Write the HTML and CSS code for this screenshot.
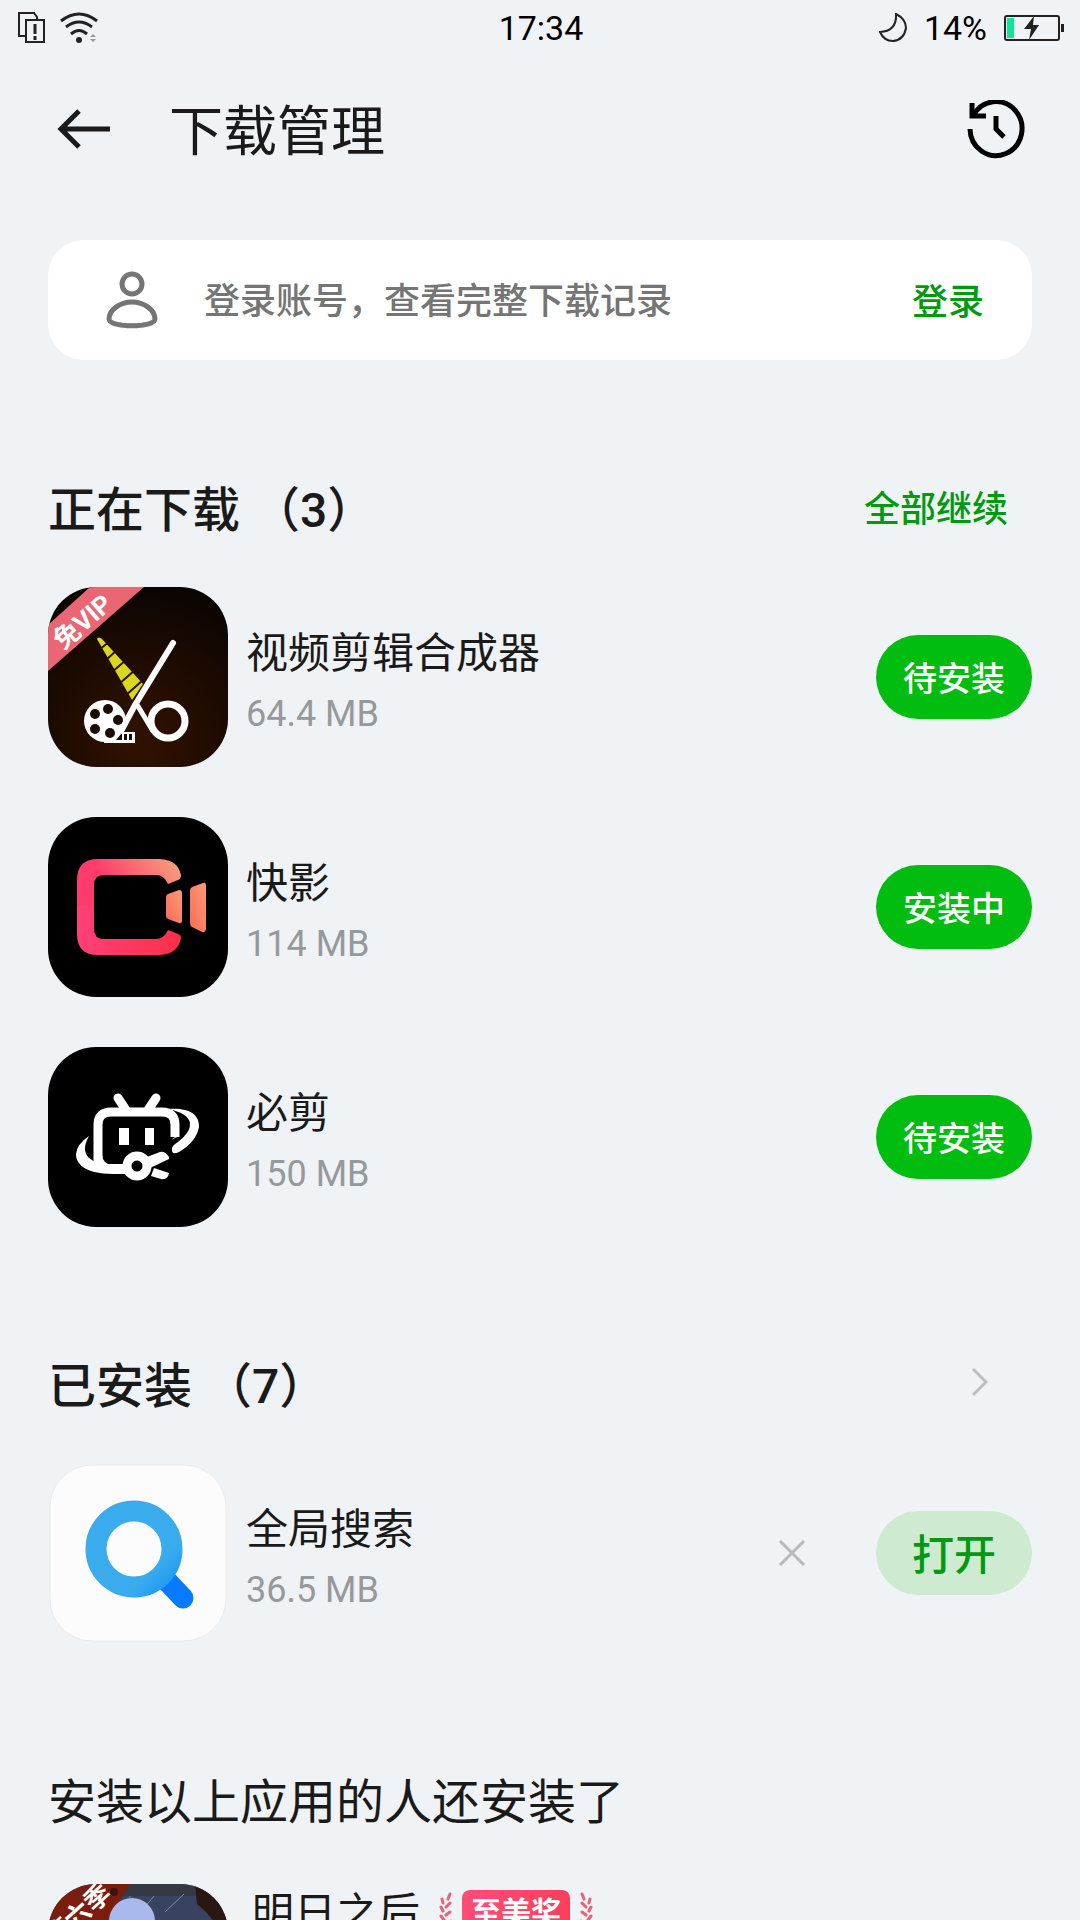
FILE: index.html
```html
<!DOCTYPE html>
<html lang="zh-CN">
<head>
  <meta charset="UTF-8">
  <meta name="viewport" content="width=device-width, initial-scale=1.0">
  <title>下载管理</title>
  <link rel="stylesheet" href="styles.css">
</head>
<body>

  <div class="status-bar">
    <div class="status-left">
      <svg width="28" height="32" viewBox="0 0 28 32" fill="none" stroke="#222" stroke-width="2">
        <path d="M7 24H1V1H16L19 5V8"/>
        <rect x="8" y="8" width="18" height="22"/>
        <path d="M17 12V22M17 24V28" stroke-width="3"/>
      </svg>
      <svg width="38" height="32" viewBox="0 0 38 32" fill="none" stroke="#222" stroke-width="3">
        <path d="M1 9Q19 -5 37 9M6 15Q19 5 32 15M11 22Q19 15 27 22"/>
        <circle cx="19" cy="28" r="3" fill="#222" stroke="none"/>
        <path d="M30 25L33 22L36 25ZM30 27L33 30L36 27Z" fill="#999" stroke="none"/>
      </svg>
    </div>
    <span class="clock">17:34</span>
    <div class="status-right">
      <svg width="28" height="30" viewBox="0 0 28 30" fill="none" stroke="#222" stroke-width="2">
        <path d="M17 1Q27 6 27 15Q25 27 14 28Q5 28 1 19Q18 18 17 1Z"/>
      </svg>
      <span>14%</span>
      <svg width="60" height="26" viewBox="0 0 60 26">
        <rect x="1" y="1" width="54" height="24" rx="2" fill="none" stroke="#222" stroke-width="2"/>
        <rect x="3" y="3" width="7" height="20" fill="#12e595"/>
        <rect x="57" y="9" width="3" height="8" fill="#222"/>
        <path d="M30 1L20 14H27L25 25L35 10H29Z" fill="#222"/>
      </svg>
    </div>
  </div>

  <header class="top-bar">
    <button class="icon-btn" aria-label="返回">
      <svg width="54" height="42" viewBox="0 0 54 42" fill="none" stroke="#1a1a1a" stroke-width="5">
        <path d="M53 20H4M22 2L4 20L22 38"/>
      </svg>
    </button>
    <h1>下载管理</h1>
    <button class="icon-btn history" aria-label="下载历史">
      <svg width="60" height="60" viewBox="0 0 60 60" fill="none" stroke="#000" stroke-width="5">
        <path d="M4 29A26 27 0 1 0 7 16"/>
        <path d="M6 3V16H20"/>
        <path d="M30 16V29L38 37"/>
      </svg>
    </button>
  </header>

  <section class="login-card">
    <svg class="person" width="52" height="58" viewBox="0 0 52 58" fill="none" stroke="#757575" stroke-width="5">
      <circle cx="26" cy="13" r="10"/>
      <path d="M26 31C38 31 49 39 49 48C49 57 3 57 3 48C3 39 14 31 26 31Z"/>
    </svg>
    <p>登录账号，查看完整下载记录</p>
    <a href="#login">登录</a>
  </section>

  <section class="group">
    <div class="group-head">
      <h2>正在下载 （3）</h2>
      <button class="resume-all">全部继续</button>
    </div>
    <ul class="app-list">
      <li class="app">
        <svg class="app-icon" viewBox="0 0 180 180">
          <defs>
            <radialGradient id="brown" cx="0.5" cy="0.85" r="0.9">
              <stop offset="0" stop-color="#321200"/>
              <stop offset="1" stop-color="#0a0402"/>
            </radialGradient>
          </defs>
          <rect width="180" height="180" fill="url(#brown)"/>
          <path d="M42 0H96L0 84V38Z" fill="#ea6673"/>
          <text class="ribbon" x="0" y="10" transform="translate(34 34) rotate(-41)">免VIP</text>
          <path d="M49 52Q50 49 54 52L95 97L84 113Z" fill="#d9d81b"/>
          <path d="M52 62L61 55M58 73L69 63M64 85L78 73M71 97L87 83M77 109L95 93" stroke="#2a1000" stroke-width="2"/>
          <path d="M125 56L87 118L72 146" stroke="#fff" stroke-width="6" stroke-linecap="round"/>
          <path d="M88 116L105 144" stroke="#fff" stroke-width="5"/>
          <circle cx="120" cy="134" r="17" fill="none" stroke="#fff" stroke-width="7"/>
          <path d="M56 145H87V156H56Z" fill="#fff"/>
          <circle cx="57" cy="134" r="21" fill="#fff"/>
          <g fill="#1c0b03">
            <circle cx="60" cy="122" r="5"/>
            <circle cx="47" cy="127" r="5"/>
            <circle cx="70" cy="133" r="5"/>
            <circle cx="47" cy="142" r="5"/>
            <circle cx="62" cy="146" r="5"/>
            <path d="M68 153L73 147H74V153ZM76 147H79V153H76ZM81 147H84V153H81Z"/>
          </g>
        </svg>
        <div class="app-info">
          <h3>视频剪辑合成器</h3>
          <p>64.4 MB</p>
        </div>
        <button class="pill">待安装</button>
      </li>
      <li class="app">
        <svg class="app-icon" viewBox="0 0 180 180">
          <defs>
            <linearGradient id="coral" x1="0" y1="0.3" x2="1" y2="0">
              <stop offset="0.2" stop-color="#ff3b6d"/>
              <stop offset="1" stop-color="#f8a67e"/>
            </linearGradient>
            <linearGradient id="rose" x1="0" y1="0" x2="1" y2="0">
              <stop offset="0" stop-color="#ff4079"/>
              <stop offset="1" stop-color="#ff2f48"/>
            </linearGradient>
            <linearGradient id="lens" x1="1" y1="0" x2="0" y2="1">
              <stop offset="0" stop-color="#f99b78"/>
              <stop offset="1" stop-color="#fb6a58"/>
            </linearGradient>
          </defs>
          <rect width="180" height="180"/>
          <path d="M29 90V63Q29 42 50 42H112Q130 43 133 58Q133 62 130 63L120 67Q116 58 108 58H56Q46 58 46 68V90Z" fill="url(#coral)"/>
          <path d="M29 89V117Q29 138 50 138H112Q130 137 133 121Q133 118 130 117L120 113Q116 122 108 122H56Q46 122 46 112V89Z" fill="url(#rose)"/>
          <path d="M120 77L131 73Q134 73 134 76V104Q134 107 131 106L120 102Q118 101 118 99V80Q118 78 120 77Z" fill="url(#lens)"/>
          <path d="M144 70L155 66Q158 65 158 69V111Q158 116 154 115L144 110Q142 109 142 106V74Q142 71 144 70Z" fill="url(#lens)"/>
        </svg>
        <div class="app-info">
          <h3>快影</h3>
          <p>114 MB</p>
        </div>
        <button class="pill">安装中</button>
      </li>
      <li class="app">
        <svg class="app-icon" viewBox="0 0 180 180">
          <rect width="180" height="180"/>
          <g fill="none" stroke="#fff" stroke-width="9">
            <path d="M70 51L78 63M108 51L100 63" stroke-linecap="round"/>
            <path d="M50 122V78Q50 65 63 65H114Q127 65 127 78V90"/>
            <circle cx="89" cy="119" r="10"/>
          </g>
          <g fill="#fff">
            <path d="M41 89Q33 103 41 111Q48 117 61 117H78V127H66C34 127 28 115 28 107Q29 97 41 89Z"/>
            <path d="M54 108Q55 117 64 118H50Z"/>
            <path d="M120 62C138 60 152 66 151 80Q148 95 131 105Q123 109 124 101Q125 98 130 95Q143 85 142 76Q140 66 120 62Z"/>
            <path d="M123 93L131 87V89Z"/>
            <rect x="71" y="81" width="10" height="17"/>
            <rect x="97" y="81" width="9" height="17"/>
            <path d="M96 111L112 105Q117 104 121 110L121 112L102 121Z"/>
            <path d="M106 121L121 126Q120 133 113 132L103 129Z"/>
          </g>
        </svg>
        <div class="app-info">
          <h3>必剪</h3>
          <p>150 MB</p>
        </div>
        <button class="pill">待安装</button>
      </li>
    </ul>
  </section>

  <section class="group installed">
    <div class="group-head">
      <h2>已安装 （7）</h2>
      <button class="icon-btn more" aria-label="查看全部">
        <svg width="16" height="30" viewBox="0 0 16 30" fill="none" stroke="#bcbec0" stroke-width="3">
          <path d="M1 2L14 15L1 28"/>
        </svg>
      </button>
    </div>
    <ul class="app-list">
      <li class="app">
        <svg class="app-icon" viewBox="0 0 180 180">
          <defs>
            <linearGradient id="handle" x1="0" y1="0" x2="1" y2="1">
              <stop offset="0.75" stop-color="#3aaced"/>
              <stop offset="1" stop-color="#1f96f5"/>
            </linearGradient>
          </defs>
          <rect x="2" y="2" width="176" height="176" rx="42" fill="#fcfcfc" stroke="#e9eaeb"/>
          <path d="M118 117L135 135" stroke="#067bff" stroke-width="21" stroke-linecap="round"/>
          <circle cx="86" cy="86" r="38" fill="none" stroke="url(#handle)" stroke-width="21"/>
        </svg>
        <div class="app-info">
          <h3>全局搜索</h3>
          <p>36.5 MB</p>
        </div>
        <button class="icon-btn remove" aria-label="移除">
          <svg width="28" height="28" viewBox="0 0 28 28" fill="none" stroke="#b8babc" stroke-width="3">
            <path d="M2 2L26 26M26 2L2 26"/>
          </svg>
        </button>
        <button class="pill pill-open">打开</button>
      </li>
    </ul>
  </section>

  <section class="recommend">
    <h2>安装以上应用的人还安装了</h2>
    <div class="app">
      <svg class="app-icon" viewBox="0 0 180 180">
        <rect width="180" height="180" fill="#3a4262"/>
        <path d="M82 0H180V12H74Z" fill="#343944"/>
        <path d="M91 30L106 12M117 28L136 10M82 12V36" stroke="#7e88a8" stroke-width="1"/>
        <path d="M147 0H180V50L168 40L158 28L149 20Z" fill="#2a1712"/>
        <path d="M0 0H82L57 40L0 90Z" fill="#7a1d0e"/>
        <path d="M61 60V37A23 23 0 0 1 107 37V60Z" fill="#a9b9ee"/>
        <circle cx="66" cy="8" r="4" fill="#3a1410"/>
        <text class="ribbon" x="0" y="9" transform="translate(30 31) rotate(-42)">第六季</text>
      </svg>
      <div class="app-info">
        <div class="name-line">
          <h3>明日之后</h3>
          <svg class="laurel" width="14" height="42" viewBox="0 0 14 42" fill="none" stroke="#e8607a" stroke-width="3" stroke-linecap="round">
            <path d="M11 4L9 9M3 9L4 13M11 13L7 17M2 17L4 21M11 22L7 25M2 26L5 30M12 31L8 33"/>
          </svg>
          <span class="award">至美奖</span>
          <svg class="laurel" width="14" height="42" viewBox="0 0 14 42" fill="none" stroke="#e8607a" stroke-width="3" stroke-linecap="round">
            <path d="M3 4L5 9M11 9L10 13M3 13L7 17M12 17L10 21M3 22L7 25M12 26L9 30M2 31L6 33"/>
          </svg>
        </div>
      </div>
    </div>
  </section>

</body>
</html>
```

FILE: styles.css
```css
* {
  box-sizing: border-box;
}
body {
  margin: 0;
  height: 100vh;
  overflow: hidden;
  background-color: #f0f3f5;
  color: #1a1a1a;
  font-family: Roboto, "Noto Sans CJK SC", sans-serif;
}
h1, h2, h3, p, ul {
  margin: 0;
  padding: 0;
}
ul {
  list-style: none;
}
svg {
  display: block;
  flex-shrink: 0;
}
button {
  padding: 0;
  border: none;
  background: none;
  font-family: inherit;
  cursor: pointer;
}
a {
  text-decoration: none;
}

.status-bar {
  display: grid;
  grid-template-columns: 1fr auto 1fr;
  align-items: center;
  height: 56px;
  padding: 0 16px 0 18px;
  font-size: 34px;
  color: #000;
}
.status-left,
.status-right {
  display: flex;
  align-items: center;
  gap: 14px;
}
.status-right {
  justify-content: flex-end;
  gap: 17px;
}

.top-bar {
  display: flex;
  align-items: center;
  height: 148px;
  padding: 0 54px 0 57px;
}
.top-bar h1 {
  flex: 1;
  margin-left: 58px;
  padding-top: 6px;
  font-size: 54px;
  font-weight: 400;
  line-height: 72px;
}

.login-card {
  display: flex;
  align-items: center;
  height: 120px;
  margin: 36px 48px 0;
  padding: 0 48px 0 58px;
  border-radius: 36px;
  background-color: #fff;
  font-size: 36px;
  font-weight: 500;
}
.login-card p {
  flex: 1;
  margin-left: 46px;
  padding-bottom: 4px;
  color: #757575;
}
.login-card a {
  padding-bottom: 2px;
  color: #009a0f;
}

.group {
  padding: 110px 48px 0;
}
.installed {
  padding-top: 119px;
}
.group-head {
  display: flex;
  align-items: center;
  justify-content: space-between;
  height: 72px;
}
.group-head h2 {
  font-size: 48px;
  font-weight: 500;
}
.resume-all {
  margin-right: 24px;
  font-size: 36px;
  font-weight: 500;
  color: #009a0f;
}
.more {
  margin-right: 44px;
}
.app-list {
  display: flex;
  flex-direction: column;
  gap: 50px;
  margin-top: 45px;
}

.app {
  display: flex;
  align-items: center;
}
.app-icon {
  width: 180px;
  height: 180px;
  border-radius: 48px;
}
.app-info {
  flex: 1;
  margin-left: 18px;
  padding-top: 14px;
}
.app-info h3 {
  font-size: 42px;
  font-weight: 400;
  line-height: 60px;
}
.app-info p {
  font-size: 36px;
  line-height: 60px;
  color: #96999b;
}
.pill {
  width: 156px;
  height: 84px;
  padding-bottom: 2px;
  border-radius: 42px;
  background-color: #00bd0f;
  color: #fff;
  font-size: 34px;
  font-weight: 500;
}
.pill-open {
  padding-bottom: 4px;
  background-color: #ceebd2;
  color: #009a0f;
  font-size: 42px;
}
.remove {
  margin-right: 70px;
}
.ribbon {
  fill: #fff;
  font-size: 26px;
  font-weight: 700;
  text-anchor: middle;
}

.recommend {
  padding: 124px 48px 0;
}
.recommend h2 {
  height: 72px;
  font-size: 48px;
  font-weight: 400;
  line-height: 72px;
}
.recommend .app {
  align-items: flex-start;
  margin-top: 45px;
}
.name-line {
  display: flex;
}
.recommend .app-info {
  margin-left: 24px;
  padding-top: 0;
}
.laurel {
  margin: 6px 9px 0 19px;
}
.award {
  height: 48px;
  margin-top: 6px;
  padding: 2px 9px;
  border-radius: 8px;
  background: linear-gradient(90deg, #ff4d79, #fb3f5c);
  color: #fff;
  font-size: 30px;
  font-weight: 700;
  line-height: 42px;
}
.award + .laurel {
  margin: 6px 0 0 9px;
}
```
